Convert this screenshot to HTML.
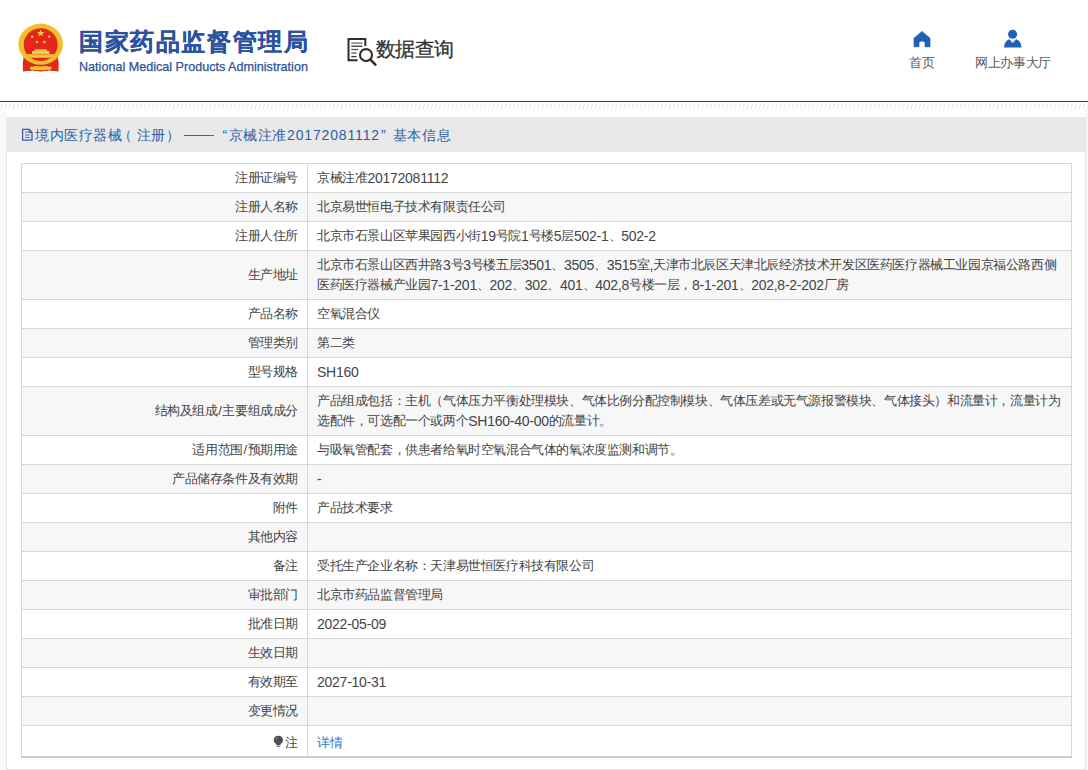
<!DOCTYPE html>
<html><head><meta charset="utf-8">
<style>
*{margin:0;padding:0;box-sizing:border-box}
html,body{width:1088px;height:770px;overflow:hidden;background:#fff;font-family:"Liberation Sans",sans-serif;color:#333}
.abs{position:absolute}
.hline{position:absolute;left:0;top:101px;width:1088px;height:1px;background:#1b4275}
.hatch{position:absolute;left:0;top:103px;width:1088px;height:5px;
 background:repeating-linear-gradient(105deg,#e4e6ee 0 1.2px,#fff 1.2px 3.9px)}
.t1{position:absolute;left:79px;top:27px;font-size:24px;font-weight:bold;color:#2a52a0;letter-spacing:1.6px;-webkit-text-stroke:0.15px #2a52a0;white-space:nowrap;line-height:30px}
.t2{position:absolute;left:79px;top:58.7px;font-size:12.6px;color:#2d5293;-webkit-text-stroke:0.25px #2d5293;white-space:nowrap;line-height:16px}
.qtxt{position:absolute;left:376px;top:35.5px;font-size:20px;color:#333;letter-spacing:-0.7px;-webkit-text-stroke:0.3px #333;white-space:nowrap;line-height:26px}
.nav{position:absolute;top:54px;text-align:center;font-size:13px;color:#5a5a5a;letter-spacing:-0.4px;line-height:18px;white-space:nowrap}
.panel{position:absolute;left:7px;top:117px;width:1079px;height:653px;background:#fff;border-right:1px solid #e3e3e3;border-bottom:1px solid #e3e3e3}
.lband{position:absolute;left:0;top:110px;width:7px;height:660px;background:#f9f9f9}
.ptitle{position:absolute;left:0;top:0;width:1078px;height:35px;background:#e9e9e9}
.pt{position:absolute;top:1px;font-size:14px;color:#2c5ea8;line-height:35px;white-space:nowrap}
table{position:absolute;left:14px;top:46px;width:1051px;table-layout:fixed;border-collapse:collapse;font-size:13px;color:#444;letter-spacing:-0.4px}
.d{letter-spacing:-0.25px;font-size:14px;line-height:1px;position:relative;top:1px}
td{border:1px solid #d6d6d6;padding:4px 9px 4px 9px;line-height:20px;height:29px;vertical-align:middle}
td.k{width:286px;text-align:right}
tr:nth-child(even) td{background:#f7f7f7}
a{color:#3477c6;text-decoration:none}
.tshadow{position:absolute;left:15px;top:640px;width:1050px;height:2px;background:#cfcfcf}
</style></head><body>
<svg class="abs" style="left:0;top:0" width="80" height="80" viewBox="0 0 80 80">
  <defs><clipPath id="dc"><ellipse cx="40.7" cy="44.6" rx="17" ry="16.4"/></clipPath></defs>
  <path d="M24 55 L57.5 55 Q59.5 63 58.5 71.5 Q50 70 40.7 71.5 Q31.5 70 23 71.5 Q22 63 24 55Z" fill="#dc2a1c"/>
  <ellipse cx="40.7" cy="44.2" rx="22.3" ry="20.6" fill="#f2bf2a"/>
  <ellipse cx="40.7" cy="44.6" rx="17" ry="16.4" fill="#e4261c"/>
  <g clip-path="url(#dc)">
   <rect x="20" y="54.2" width="42" height="3.6" fill="#f3c237"/>
  </g>
  <path d="M29 68.5 Q34 65 40.7 66.5 Q47.5 65 52.5 68.5 Q47 71 40.7 70 Q34.5 71 29 68.5Z" fill="#f2bf2a"/>
  <path d="M31 66.5 L32.5 71 M50.5 66.5 L49 71" stroke="#f7dc8a" stroke-width="1"/>
  <polygon points="40.7,29.3 41.6,32 44.5,32 42.2,33.7 43,36.4 40.7,34.8 38.4,36.4 39.2,33.7 36.9,32 39.8,32" fill="#f7d04a"/>
  <circle cx="32.2" cy="36.8" r="1.25" fill="#f3c64e"/>
  <circle cx="49.2" cy="36.8" r="1.25" fill="#f3c64e"/>
  <circle cx="37" cy="42" r="1.25" fill="#f3c64e"/>
  <circle cx="44.4" cy="42" r="1.25" fill="#f3c64e"/>
  <path d="M35 49.3 L46.5 49.3 L47.5 51.2 L34 51.2Z" fill="#f0c040"/>
  <rect x="32" y="51.2" width="17.4" height="2.6" fill="#f6d27a"/>
</svg>
<div class="t1">国家药品监督管理局</div>
<div class="t2">National Medical Products Administration</div>
<svg class="abs" style="left:340px;top:30px" width="40" height="40" viewBox="340 30 40 40">
  <path d="M365.3 46 L365.3 39 L348.5 39 L348.5 60.3 L357.5 60.3" fill="none" stroke="#2e2e33" stroke-width="2"/>
  <g stroke-width="1.3">
   <line x1="351.3" y1="43.1" x2="362.4" y2="43.1" stroke="#666"/>
   <line x1="351.3" y1="46.2" x2="362.4" y2="46.2" stroke="#333"/>
   <line x1="351.3" y1="49.5" x2="358.2" y2="49.5" stroke="#555"/>
   <line x1="351.3" y1="53" x2="356.4" y2="53" stroke="#555"/>
   <line x1="351.3" y1="56.6" x2="356.4" y2="56.6" stroke="#333"/>
  </g>
  <circle cx="366" cy="55.1" r="6" fill="#fff" stroke="#2e2e33" stroke-width="2.1"/>
  <line x1="370.4" y1="59.6" x2="375.4" y2="64.6" stroke="#2e2e33" stroke-width="2.6" stroke-linecap="round"/>
</svg>
<div class="qtxt">数据查询</div>
<svg class="abs" style="left:900px;top:25px" width="130" height="26" viewBox="900 25 130 26">
  <path d="M922 31.4 L930 38.2 L930 46.8 L925 46.8 L925 42.2 Q922 39.6 919 42.2 L919 46.8 L914 46.8 L914 38.2Z" fill="#1f5fb4" stroke="#1f5fb4" stroke-width="0.7" stroke-linejoin="round"/>
  <circle cx="1012.6" cy="34.3" r="4.5" fill="#1f5fb4"/>
  <path d="M1004 47.4 Q1004.5 40.5 1009.5 39.3 L1012.7 43 L1016 39.3 Q1021 40.5 1021.5 47.4Z" fill="#1f5fb4"/>
</svg>
<div class="nav" style="left:896px;width:52px">首页</div>
<div class="nav" style="left:966px;width:94px">网上办事大厅</div>
<div class="hline"></div>
<svg class="abs" style="left:0;top:102.5px" width="1088" height="6"><defs><pattern id="ht" width="4.1" height="6" patternUnits="userSpaceOnUse"><line x1="0.6" y1="5.8" x2="2.4" y2="0.4" stroke="#e9eaf0" stroke-width="1.2"/></pattern></defs><rect width="1088" height="6" fill="url(#ht)"/></svg>
<div class="lband"></div><div class="abs" style="left:1086px;top:110px;width:2px;height:660px;background:#f6f6f6"></div>
<div class="panel">
 <div class="ptitle"></div><span class="pt" style="left:28px;letter-spacing:0.5px">境内医疗器械</span><span class="pt" style="left:110.5px;">（</span><span class="pt" style="left:129.5px;letter-spacing:0.5px">注册</span><span class="pt" style="left:159px;">）</span><div class="abs" style="left:176.5px;top:18.3px;width:30.5px;height:1.2px;background:#3a66ad"></div><span class="pt" style="left:215.5px;">“</span><span class="pt" style="left:221.5px;letter-spacing:0.5px">京械注准</span><span class="pt" style="left:280px;letter-spacing:0.85px">20172081112</span><span class="pt" style="left:374px;">”</span><span class="pt" style="left:385.5px;letter-spacing:0.8px">基本信息</span>
 <svg class="abs" style="left:14px;top:10px" width="14" height="16" viewBox="0 0 14 16">
  <path d="M1.6 2.4 L8.2 2.4 L11 5.2 L11 13.2 L1.6 13.2Z" fill="none" stroke="#3d58a8" stroke-width="1.3" stroke-linejoin="round"/>
  <path d="M8 2.4 L8 5.4 L11 5.4" fill="none" stroke="#3d58a8" stroke-width="1.1"/>
  <line x1="4" y1="5.2" x2="6.8" y2="5.2" stroke="#5566b0" stroke-width="1"/>
  <line x1="4" y1="8" x2="8.8" y2="8" stroke="#5566b0" stroke-width="1"/>
  <line x1="4" y1="10.4" x2="8.8" y2="10.4" stroke="#5566b0" stroke-width="1"/>
 </svg>
 <table><colgroup><col style="width:286px"><col></colgroup>
  <tr><td class="k">注册证编号</td><td>京械注准<span class="d">20172081112</span></td></tr>
  <tr><td class="k">注册人名称</td><td>北京易世恒电子技术有限责任公司</td></tr>
  <tr><td class="k">注册人住所</td><td>北京市石景山区苹果园西小街<span class="d">19</span>号院<span class="d">1</span>号楼<span class="d">5</span>层<span class="d">502-1</span>、<span class="d">502-2</span></td></tr>
  <tr><td class="k">生产地址</td><td style="white-space:nowrap">北京市石景山区西井路<span class="d">3</span>号<span class="d">3</span>号楼五层<span class="d">3501</span>、<span class="d">3505</span>、<span class="d">3515</span>室<span class="d">,</span>天津市北辰区天津北辰经济技术开发区医药医疗器械工业园京福公路西侧<br>医药医疗器械产业园<span class="d">7-1-201</span>、<span class="d">202</span>、<span class="d">302</span>、<span class="d">401</span>、<span class="d">402,8</span>号楼一层，<span class="d">8-1-201</span>、<span class="d">202,8-2-202</span>厂房</td></tr>
  <tr><td class="k">产品名称</td><td>空氧混合仪</td></tr>
  <tr><td class="k">管理类别</td><td>第二类</td></tr>
  <tr><td class="k">型号规格</td><td><span class="d">SH160</span></td></tr>
  <tr><td class="k">结构及组成<span style="margin:0 1px 0 0.5px">/</span>主要组成成分</td><td style="white-space:nowrap">产品组成包括：主机（气体压力平衡处理模块、气体比例分配控制模块、气体压差或无气源报警模块、气体接头）和流量计，流量计为<br>选配件，可选配一个或两个<span class="d">SH160-40-00</span>的流量计。</td></tr>
  <tr><td class="k">适用范围<span style="margin:0 1px 0 0.5px">/</span>预期用途</td><td>与吸氧管配套，供患者给氧时空氧混合气体的氧浓度监测和调节。</td></tr>
  <tr><td class="k">产品储存条件及有效期</td><td><span class="d">-</span></td></tr>
  <tr><td class="k">附件</td><td>产品技术要求</td></tr>
  <tr><td class="k">其他内容</td><td></td></tr>
  <tr><td class="k">备注</td><td>受托生产企业名称：天津易世恒医疗科技有限公司</td></tr>
  <tr><td class="k">审批部门</td><td>北京市药品监督管理局</td></tr>
  <tr><td class="k">批准日期</td><td><span class="d">2022-05-09</span></td></tr>
  <tr><td class="k">生效日期</td><td></td></tr>
  <tr><td class="k">有效期至</td><td><span class="d">2027-10-31</span></td></tr>
  <tr><td class="k">变更情况</td><td></td></tr>
  <tr><td class="k" style="height:32px;padding-top:5px;padding-bottom:3px">注</td><td style="padding-top:5px;padding-bottom:3px"><a>详情</a></td></tr>
 </table>
 <svg class="abs" style="left:266px;top:618px" width="11" height="13" viewBox="0 0 11 13">
  <path d="M5.3 0.8 C8.2 0.8 10 2.8 10 5.2 C10 7 8.8 8 7.6 9 L7.6 10 L3.2 10 L3.2 9 C2 8 0.7 7 0.7 5.2 C0.7 2.8 2.5 0.8 5.3 0.8Z" fill="#4a4f55"/>
  <rect x="3.5" y="10.6" width="3.8" height="1.2" fill="#5a5f65"/>
  <path d="M3.2 4.5 Q3.5 2.8 5 2.5" fill="none" stroke="#9aa0a6" stroke-width="0.8"/>
 </svg>
 <div class="abs" style="left:-1px;top:0;width:1px;height:653px;background:#e8e8e8"></div>
 <div class="abs" style="left:14px;top:639px;width:1051px;height:2px;background:#cacaca"></div>
</div>
</body></html>
